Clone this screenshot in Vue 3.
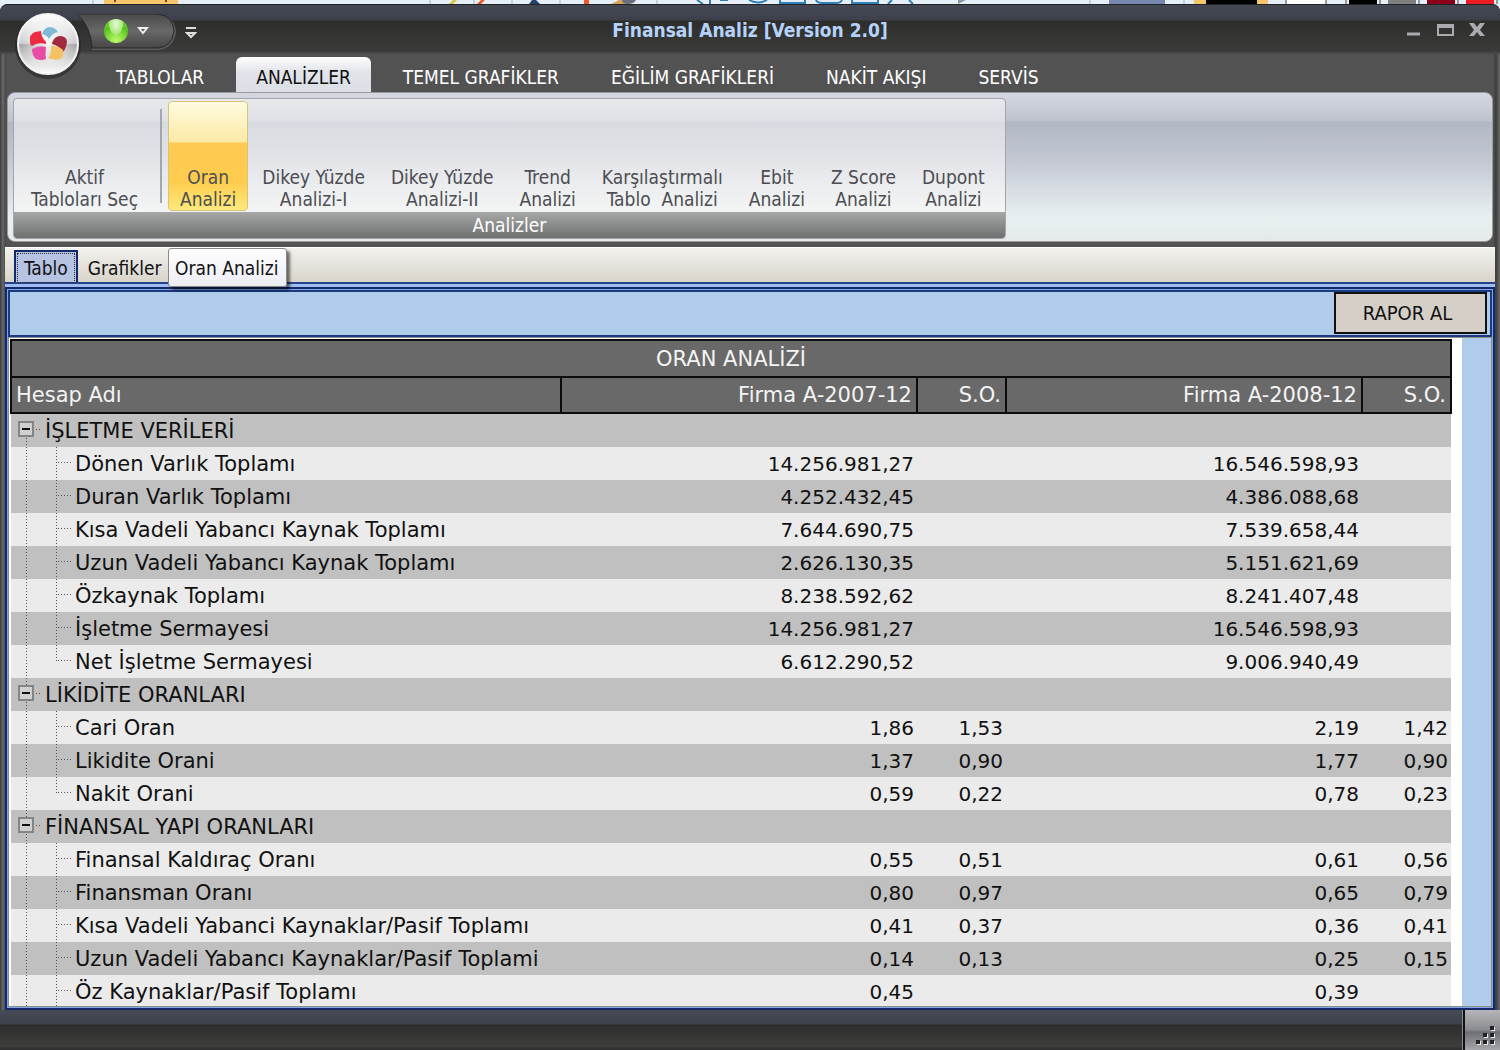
<script setup>
import { computed, reactive, ref } from 'vue'

const tabs = ['TABLOLAR', 'ANALİZLER', 'TEMEL GRAFİKLER', 'EĞİLİM GRAFİKLERİ', 'NAKİT AKIŞI', 'SERVİS']
const activeTab = ref('ANALİZLER')

const commands = [
  ['Oran', 'Analizi'],
  ['Dikey Yüzde', 'Analizi-I'],
  ['Dikey Yüzde', 'Analizi-II'],
  ['Trend', 'Analizi'],
  ['Karşılaştırmalı', 'Tablo\u00a0 Analizi'],
  ['Ebit', 'Analizi'],
  ['Z Score', 'Analizi'],
  ['Dupont', 'Analizi'],
]
const activeCommand = ref(0)

const groups = reactive([
  {
    name: 'İŞLETME VERİLERİ',
    open: true,
    items: [
      ['Dönen Varlık Toplamı', '14.256.981,27', '', '16.546.598,93', ''],
      ['Duran Varlık Toplamı', '4.252.432,45', '', '4.386.088,68', ''],
      ['Kısa Vadeli Yabancı Kaynak Toplamı', '7.644.690,75', '', '7.539.658,44', ''],
      ['Uzun Vadeli Yabancı Kaynak Toplamı', '2.626.130,35', '', '5.151.621,69', ''],
      ['Özkaynak Toplamı', '8.238.592,62', '', '8.241.407,48', ''],
      ['İşletme Sermayesi', '14.256.981,27', '', '16.546.598,93', ''],
      ['Net İşletme Sermayesi', '6.612.290,52', '', '9.006.940,49', ''],
    ],
  },
  {
    name: 'LİKİDİTE ORANLARI',
    open: true,
    items: [
      ['Cari Oran', '1,86', '1,53', '2,19', '1,42'],
      ['Likidite Orani', '1,37', '0,90', '1,77', '0,90'],
      ['Nakit Orani', '0,59', '0,22', '0,78', '0,23'],
    ],
  },
  {
    name: 'FİNANSAL YAPI ORANLARI',
    open: true,
    more: true,
    items: [
      ['Finansal Kaldıraç Oranı', '0,55', '0,51', '0,61', '0,56'],
      ['Finansman Oranı', '0,80', '0,97', '0,65', '0,79'],
      ['Kısa Vadeli Yabanci Kaynaklar/Pasif Toplamı', '0,41', '0,37', '0,36', '0,41'],
      ['Uzun Vadeli Yabancı Kaynaklar/Pasif Toplami', '0,14', '0,13', '0,25', '0,15'],
      ['Öz Kaynaklar/Pasif Toplamı', '0,45', '', '0,39', ''],
    ],
  },
])

const rows = computed(() =>
  groups.flatMap((group, g) => [
    { key: group.name, group, first: g === 0 },
    ...(group.open
      ? group.items.map((cells, i) => ({
          key: group.name + cells[0],
          cells,
          last: i === group.items.length - 1 && !group.more,
        }))
      : []),
  ]),
)
</script>

<template>
  <div class="screen">
    <svg class="backdrop" width="1500" height="5" aria-hidden="true">
      <rect width="1500" height="5" fill="#e6eef8" />
      <path d="M93 0v5M430 0v5M474 0v5M512 0v5M560 0v5M657 0v5M1090 0v5M1184 0v5" stroke="#9fb2c8" />
      <rect x="104" width="74" height="4" fill="#f6c56c" />
      <path d="M115 0v2M166 0v2" stroke="#6b4a1a" stroke-width="2" />
      <path d="M449 4l4-4h4l-4 4z" fill="#d8c640" />
      <path d="M477 4l4-4h4l-4 4zM584 0h5v4h-5z" fill="#ee5a28" />
      <path d="M529 4l3-4h4l4 4z" fill="#25416e" />
      <path d="M611 4l8-4h9v4z" fill="#d8a45c" />
      <path d="M622 0h14q-2 4-8 4t-6-4z" fill="#6a7080" />
      <path d="M697 0l6 4M710 0v4M720 0h8M749 0q9 5 18 0M780 0v3h25v-3M816 0q1 3 6 3h14q5 0 6-3M852 0v3h26v-3M888 4l4-4M909 0l4 4" fill="none" stroke="#2f7fb8" stroke-width="2" />
      <path d="M958 0v4l8-4z" fill="#8a98ae" />
      <rect x="1109" width="56" height="4" fill="#7688b2" />
      <rect x="1194" width="74" height="4" fill="#f6c56c" />
      <rect x="1206" width="51" height="4" fill="#000" />
      <rect x="1286" width="40" height="4" fill="#fff" />
      <rect x="1349" width="28" height="4" fill="#000" />
      <rect x="1388" width="28" height="4" fill="#808080" />
      <rect x="1427" width="28" height="4" fill="#8a0018" />
      <rect x="1466" width="28" height="4" fill="#ed1c24" />
      <path d="M1286 0v4M1326 0v4M1346 0v4M1380 0v4M1419 0v4M1458 0v4M1497 0v4" stroke="#444" />
    </svg>

    <div class="window">
      <header class="titlebar">
        <button class="orb" aria-label="Uygulama menüsü">
          <svg width="68" height="68" viewBox="0 0 68 68">
            <defs>
              <linearGradient id="orbFill" x1="0" y1="0" x2="0" y2="1">
                <stop offset="0" stop-color="#fff" />
                <stop offset="0.3" stop-color="#e4e4e6" />
                <stop offset="0.49" stop-color="#cfcfd1" />
                <stop offset="0.51" stop-color="#a9a9ab" />
                <stop offset="0.75" stop-color="#d6d6d6" />
                <stop offset="1" stop-color="#fff" />
              </linearGradient>
              <radialGradient id="orbGlow" cx="0.5" cy="0.5" r="0.5">
                <stop offset="0" stop-color="#fff" stop-opacity="0.9" />
                <stop offset="1" stop-color="#fff" stop-opacity="0" />
              </radialGradient>
            </defs>
            <circle cx="34" cy="34" r="33" fill="#262626" opacity="0.6" />
            <circle cx="34" cy="32" r="30" fill="url(#orbFill)" stroke="#f4f4f4" stroke-width="2" />
            <circle cx="34" cy="32" r="26" fill="url(#orbGlow)" />
            <path d="M28 22Q30 16 35 15Q41 15 44 20Q38 21 35 27Q33 23 28 22Z" fill="#7fb9d6" />
            <path d="M39 29Q41 24 47 24Q53 25 53 30Q52 37 49 40Q46 34 38 32Q38 30 39 29Z" fill="#a32a3c" />
            <path d="M37 34Q45 34 49 38Q50 44 47 47Q41 49 34 46Q38 41 37 34Z" fill="#f4c265" />
            <path d="M18 37Q25 33 32 35Q31 42 32 47Q27 49 22 47Q18 44 18 37Z" fill="#e84da4" />
            <path d="M16 30Q15 22 21 20L27 19Q27 25 32 30L32 32Q23 30 18 34Q16 33 16 30Z" fill="#ec2a40" />
          </svg>
        </button>
        <div class="quick">
          <svg class="pill" width="102" height="38" viewBox="0 0 102 38" aria-hidden="true">
            <defs>
              <linearGradient id="pillFill" x1="0" y1="0" x2="0" y2="1">
                <stop offset="0" stop-color="#4a4a4a" />
                <stop offset="0.5" stop-color="#686868" />
                <stop offset="1" stop-color="#464646" />
              </linearGradient>
            </defs>
            <path d="M1 1H82Q99 3 100 18Q98 34 82 36H16Q16 12 1 1Z" fill="#5c5c5c" />
            <path d="M1 0H82Q97 2 98 17Q96 33 82 34H16Q15 12 1 0Z" fill="url(#pillFill)" stroke="#282828" />
          </svg>
          <button class="quick-run" aria-label="Çalıştır"><span class="ball"></span></button>
          <button class="quick-drop" aria-label="Seçenekler">
            <svg width="12" height="10" viewBox="0 0 12 10"><path d="M2 2l4 5 4-5z" fill="#555" stroke="#eee" stroke-width="2" /></svg>
          </button>
        </div>
        <button class="quick-more" aria-label="Araç çubuğunu özelleştir">
          <svg width="12" height="14" viewBox="0 0 12 14"><path d="M1 2h10" stroke="#ddd" stroke-width="2" /><path d="M2 7l4 4 4-4z" fill="#444" stroke="#ddd" stroke-width="2" /></svg>
        </button>
        <h1>Finansal Analiz [Version 2.0]</h1>
        <div class="controls">
          <button aria-label="Küçült">
            <svg width="18" height="16" viewBox="0 0 18 16"><path d="M3 12h13" stroke="#a9abb0" stroke-width="3" /></svg>
          </button>
          <button aria-label="Ekranı kapla">
            <svg width="18" height="16" viewBox="0 0 18 16"><path d="M2 3h15v10H2z" fill="none" stroke="#a9abb0" stroke-width="2" /><path d="M1 4h17" stroke="#a9abb0" stroke-width="4" /></svg>
          </button>
          <button aria-label="Kapat">
            <svg width="18" height="16" viewBox="0 0 18 16"><path d="M1 1h5l3 4 3-4h5l-5 7 5 6h-5l-3-4-3 4H1l5-6z" fill="#a9abb0" /></svg>
          </button>
        </div>
      </header>

      <nav class="tabs">
        <button
          v-for="tab in tabs"
          :key="tab"
          :class="{ active: tab === activeTab }"
          @click="activeTab = tab"
        >{{ tab }}</button>
      </nav>

      <section class="ribbon">
        <div class="group">
          <div class="commands">
            <button class="command">Aktif<br>Tabloları Seç</button>
            <span class="divider"></span>
            <button
              v-for="(command, i) in commands"
              :key="i"
              class="command"
              :class="{ active: i === activeCommand }"
              @click="activeCommand = i"
            >{{ command[0] }}<br>{{ command[1] }}</button>
          </div>
          <div class="caption">Analizler</div>
        </div>
      </section>

      <main class="content">
        <div class="pages">
          <button class="page current"><span>Tablo</span></button>
          <button class="page">Grafikler</button>
          <div class="tooltip" role="tooltip">Oran Analizi</div>
        </div>
        <div class="frame">
          <div class="toolbar">
            <button class="report">RAPOR AL</button>
          </div>
          <div class="sheet">
            <div class="scroller">
              <table>
                <colgroup>
                  <col>
                  <col class="amount">
                  <col class="sector">
                  <col class="amount">
                  <col class="sector">
                </colgroup>
                <thead>
                  <tr><th colspan="5" class="heading">ORAN ANALİZİ</th></tr>
                  <tr>
                    <th class="name">Hesap Adı</th>
                    <th>Firma A-2007-12</th>
                    <th>S.O.</th>
                    <th>Firma A-2008-12</th>
                    <th>S.O.</th>
                  </tr>
                </thead>
                <tbody>
                  <tr v-for="row in rows" :key="row.key">
                    <template v-if="row.group">
                      <td colspan="5">
                        <div class="node">
                          <button
                            class="toggle"
                            :aria-expanded="row.group.open"
                            :aria-label="row.group.name"
                            @click="row.group.open = !row.group.open"
                          >
                            <svg width="34" height="33" viewBox="0 0 34 33">
                              <path v-if="!row.first" d="M15.5 0v8" class="dots" />
                              <path d="M15.5 24v9M25 15.5h6" class="dots" />
                              <rect x="8" y="8" width="14" height="14" fill="#d0d0d0" stroke="#858585" stroke-width="2" />
                              <path d="M11 15h8" stroke="#111" stroke-width="2" />
                              <path v-if="!row.group.open" d="M15 11v8" stroke="#111" stroke-width="2" />
                            </svg>
                          </button>
                          {{ row.group.name }}
                        </div>
                      </td>
                    </template>
                    <template v-else>
                      <td>
                        <div class="node">
                          <svg width="64" height="33" viewBox="0 0 64 33" aria-hidden="true">
                            <path d="M15.5 0v33" class="dots" />
                            <path :d="row.last ? 'M45.5 0v16' : 'M45.5 0v33'" class="dots" />
                            <path d="M47 15.5h13" class="dots" />
                          </svg>
                          {{ row.cells[0] }}
                        </div>
                      </td>
                      <td v-for="c in 4" :key="c" class="number">{{ row.cells[c] }}</td>
                    </template>
                  </tr>
                </tbody>
              </table>
            </div>
          </div>
        </div>
      </main>

      <footer class="status">
        <div class="grip">
          <svg width="20" height="20" viewBox="0 0 20 20" aria-hidden="true">
            <path d="M15 2h4v4h-4zM8 9h4v4H8zM15 9h4v4h-4zM1 16h4v4H1zM8 16h4v4H8zM15 16h4v4h-4z" fill="#e8e8e8" />
            <path d="M14 1h4v4h-4zM7 8h4v4H7zM14 8h4v4h-4zM0 15h4v4H0zM7 15h4v4H7zM14 15h4v4h-4z" fill="#222" />
          </svg>
        </div>
      </footer>
    </div>
  </div>
</template>

<style>
body {
  background: #4a4a4a;
}
</style>

<style scoped>
.screen {
  --ui: "DejaVu Sans Condensed", "Noto Sans", sans-serif;
  --grid: "DejaVu Sans", sans-serif;
  display: flex;
  flex-direction: column;
  height: 100vh;
  overflow: hidden;
  background: #e6eef8;
  font-family: var(--ui);
  font-size: 19px;
}

button {
  margin: 0;
  padding: 0;
  border: 0;
  background: none;
  font: inherit;
  color: inherit;
  cursor: pointer;
}

svg {
  display: block;
}

.backdrop {
  flex: none;
  height: 4px;
}

.window {
  flex: 1;
  min-height: 0;
  display: flex;
  flex-direction: column;
  background: linear-gradient(90deg, #3c3c3c, #6a6a6a 3px, #4a4a4a 5px, #525252 7px, #525252 calc(100% - 7px), #3c3c3c calc(100% - 4px), #6a6a6a);
  border-radius: 8px 8px 0 0;
}

.titlebar {
  position: relative;
  display: flex;
  align-items: flex-start;
  height: 50px;
  flex: none;
  box-sizing: border-box;
  padding: 9px 14px 0 76px;
  border-top: 1px solid #222;
  border-bottom: 2px solid #484848;
  border-radius: 8px 8px 0 0;
  background: linear-gradient(#444854, #3d404a 15px, #2d2d2c 16px, #3b3b3a);
}

.orb {
  position: absolute;
  left: 14px;
  top: 7px;
  z-index: 2;
}

.quick {
  position: relative;
  display: flex;
  align-items: center;
  gap: 9px;
  width: 98px;
  height: 34px;
  box-sizing: border-box;
  padding-left: 28px;
}

.pill {
  position: absolute;
  left: 0;
  top: 0;
}

.quick-run,
.quick-drop {
  position: relative;
}

.ball {
  display: block;
  width: 24px;
  height: 24px;
  border-radius: 50%;
  background: radial-gradient(ellipse at 50% 20%, #e6fbd8, #a4e878 40%, transparent 41%), radial-gradient(circle at 50% 90%, #c2fb6c, #56c41c 60%, #8ad65c);
}

.quick-more {
  margin: 12px 0 0 11px;
}

.titlebar h1 {
  position: absolute;
  left: 0;
  right: 0;
  top: 13px;
  margin: 0;
  text-align: center;
  font-size: 19px;
  line-height: 24px;
  color: #b5d3fa;
  pointer-events: none;
}

.controls {
  display: flex;
  gap: 14px;
  margin: 8px 0 0 auto;
}

.tabs {
  display: flex;
  gap: 12px;
  flex: none;
  padding: 3px 0 0 96px;
  color: #fff;
}

.tabs button {
  height: 35px;
  padding: 4px 20px 0;
  border-radius: 6px 6px 0 0;
  white-space: nowrap;
}

.tabs button.active {
  background: linear-gradient(#fff, #e3e5ea 40%, #dcdee6);
  color: #111;
}

.ribbon {
  flex: none;
  margin: 0 7px;
  padding: 5px 5px 2px;
  border: 1px solid #9b9b9d;
  border-radius: 8px;
  background: linear-gradient(#d5d8e2, #bfc3ce 28px, #b1b7c4 29px, #c5cad4 70px, #e9f0f2 125px, #e4eaeb);
}

.group {
  width: max-content;
  border: 1px solid #a2a5aa;
  border-radius: 4px;
  overflow: hidden;
  background: linear-gradient(#e8e9ed, #dfe1e6 22px, #d8dbe1 23px, #dfe1e6 50px, #f3f5f5 112px);
}

.commands {
  display: flex;
  gap: 2px;
  padding: 2px 8px 1px 5px;
  color: #4d4d52;
}

.command {
  box-sizing: border-box;
  height: 110px;
  padding: 64px 11px 0;
  border: 1px solid transparent;
  border-radius: 4px;
  line-height: 22px;
  white-space: nowrap;
}

.command.active {
  border-color: #d8c27c;
  background: linear-gradient(#fffce0, #fbe9a4 40px, #fdc952 41px, #fecd4e 80px, #ffea7c);
}

.divider {
  width: 2px;
  margin: 8px 4px 8px 8px;
  background: #a3a6aa;
}

.caption {
  height: 26px;
  line-height: 26px;
  text-align: center;
  color: #fff;
  background: linear-gradient(#a7a9a8, #6e706f);
}

.content {
  flex: 1;
  min-height: 0;
  display: flex;
  flex-direction: column;
  padding: 5px 5px 0;
}

.pages {
  position: relative;
  display: flex;
  align-items: flex-end;
  gap: 2px;
  height: 37px;
  flex: none;
  box-sizing: border-box;
  padding-left: 9px;
  border-top: 1px solid #fff;
  border-bottom: 2px solid #27418c;
  background: linear-gradient(#f2f1ed, #d8d4ca);
  color: #111;
}

.page {
  height: 32px;
  padding: 4px 8px 0;
}

.page.current {
  padding: 1px;
  border: 2px solid #12296b;
  border-bottom: 0;
  background: #b6c3e2;
}

.page.current span {
  display: block;
  padding: 1px 6px 0;
  border: 1px dotted #333;
  line-height: 27px;
}

.tooltip {
  position: absolute;
  left: 163px;
  top: 0;
  z-index: 3;
  padding: 1px 8px 0 6px;
  border: 1px solid #8a8a8a;
  border-radius: 3px;
  background: linear-gradient(#fff, #ececf4);
  box-shadow: 3px 3px 3px rgba(0, 0, 0, 0.55);
  line-height: 36px;
  white-space: nowrap;
}

.frame {
  flex: 1;
  min-height: 0;
  display: flex;
  flex-direction: column;
  margin-top: 3px;
  border: 2px solid #14296c;
  box-shadow: 0 -3px #9fbdf0;
  background: #7fa5e2;
  padding: 1px;
}

.toolbar {
  display: flex;
  justify-content: flex-end;
  flex: none;
  padding: 0 3px 1px 1px;
  border: 2px solid #1c3a80;
  background: #afcdeb;
}

.report {
  width: 153px;
  height: 42px;
  border: 2px solid #111;
  background: #d5cfc7;
  color: #111;
  padding-right: 6px;
  font-size: 20px;
}

.sheet {
  flex: 1;
  min-height: 0;
  display: flex;
  padding-right: 29px;
  border: 1px solid #8c8c8c;
  background: #afcdeb;
}

.scroller {
  flex: 1;
  overflow: hidden;
  padding: 1px 10px 0 1px;
  background: #fff;
}

table {
  width: 100%;
  table-layout: fixed;
  border-collapse: collapse;
  font-family: var(--grid);
  font-size: 21px;
  color: #111;
}

.amount {
  width: 356px;
}

.sector {
  width: 89px;
}

th {
  height: 36px;
  padding: 0 4px;
  box-sizing: border-box;
  border: 2px solid #0c0c0c;
  background: #696969;
  color: #f4f4f4;
  font-weight: normal;
  text-align: right;
}

th.heading {
  height: 37px;
  text-align: center;
}

th.name {
  text-align: left;
}

td {
  height: 33px;
  padding: 0;
  white-space: nowrap;
}

tbody tr:nth-child(odd) {
  background: #c0c0c0;
}

tbody tr:nth-child(even) {
  background: #ebebeb;
}

.node {
  display: flex;
  align-items: center;
  height: 33px;
}

.number {
  padding-right: 3px;
  font-size: 20px;
  text-align: right;
}

.dots {
  fill: none;
  stroke: #555;
  stroke-dasharray: 1 2;
}

.status {
  display: flex;
  justify-content: flex-end;
  flex: none;
  height: 40px;
  background: linear-gradient(#464a55, #3e414b 14px, #2d2d2c 15px, #3e3e3d 36px, #2a2a2a);
}

.grip {
  display: flex;
  align-items: flex-end;
  justify-content: flex-end;
  width: 37px;
  box-sizing: border-box;
  padding: 0 4px 5px 0;
  border-left: 2px solid #111;
  box-shadow: -1px 0 #8a8a8a;
  background: linear-gradient(#b6b6b9, #8a8b90 50%, #6d6f76 55%, #a4a6aa);
}
</style>
